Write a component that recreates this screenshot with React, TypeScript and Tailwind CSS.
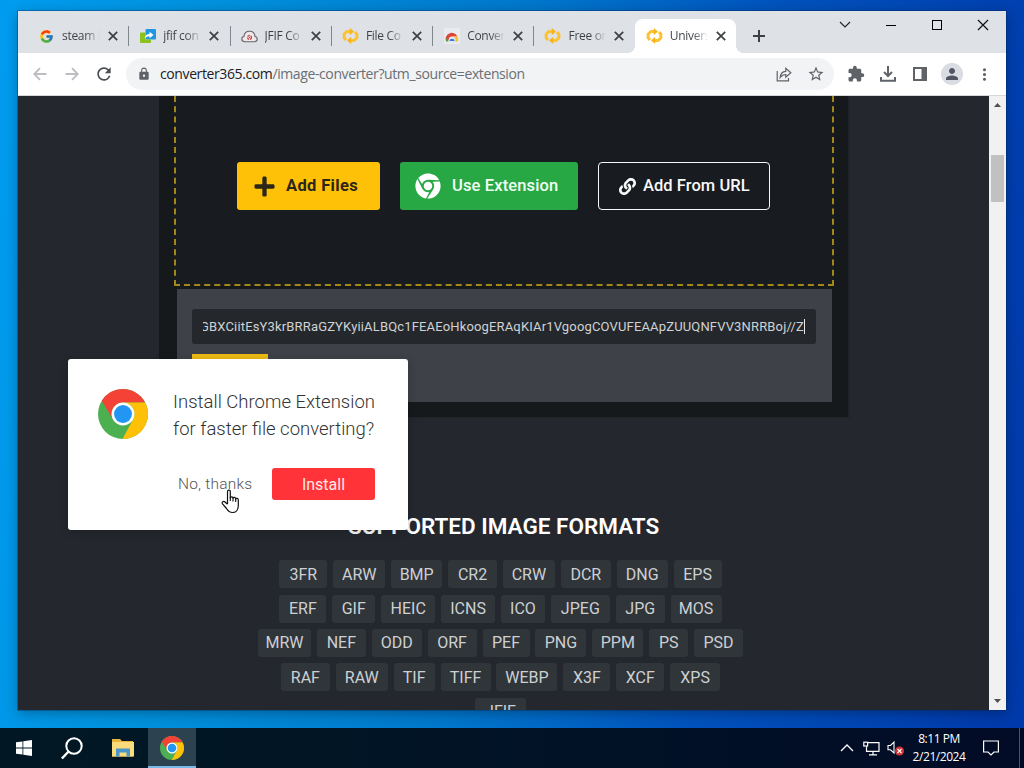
import type { ReactNode } from "react";
import { FaChrome, FaLink, FaPlus } from "react-icons/fa";
import { FcGoogle } from "react-icons/fc";
import { MdExtension, MdLock, MdMoreVert, MdPerson, MdRefresh, MdStarOutline } from "react-icons/md";

function ChromeLogo({ size, ring = "#fff" }: { size: number; ring?: string }) {
  return (
    <svg width={size} height={size} viewBox="0 0 48 48" className="block shrink-0">
      <circle cx="24" cy="24" r="24" fill="#4caf50" />
      <path d="M24 0a24 24 0 0 1 21.2 13H24a11 11 0 0 0-9.5 16.5L3.6 11.3A24 24 0 0 1 24 0z" fill="#f44336" />
      <path d="M24 13h21.3A24 24 0 0 1 23.500 48L33.500 29.500A11 11 0 0 0 24 13z" fill="#ffc107" />
      <circle cx="24" cy="24" r="11" fill={ring} />
      <circle cx="24" cy="24" r="8.600" fill="#2196f3" />
    </svg>
  );
}

function SyncMark() {
  return (
    <svg width="17" height="16" viewBox="0 0 17 16" className="block">
      <g fill="none" stroke="#fbc233" strokeWidth="3" strokeLinejoin="round">
        <path d="M4 12L2.100 9.800V6.200L4.800 3.500H8.500" />
        <path d="M13 4L14.900 6.200V9.800L12.200 12.500H8.500" />
      </g>
      <path d="M7.800 0L12 3.600L7.800 7.200z" fill="#f9b41c" />
      <path d="M9.200 8.800L5 12.400L9.200 16z" fill="#f9b41c" />
    </svg>
  );
}

function ConvertMark() {
  return (
    <svg width="16" height="14" viewBox="0 0 16 14" className="block">
      <rect x="5.500" y="0" width="10.500" height="10.500" rx="1" fill="#2196e3" />
      <path d="M0 4.500a1 1 0 0 1 1-1h4.500v7H11V13a1 1 0 0 1-1 1H1a1 1 0 0 1-1-1z" fill="#8cc21f" />
      <path d="M4.800 9.800C4.800 6.500 6.800 5 9.500 5V2.800L13.500 6L9.500 9.200V7.200C7.500 7.200 6 7.900 4.800 9.800z" fill="#fff" />
    </svg>
  );
}

function CloudMark() {
  return (
    <svg width="17" height="13" viewBox="0 0 17 13" className="block">
      <path d="M4 11.800C1.800 11.800.8 10.600.8 9.100C.8 7.600 1.800 6.700 3 6.500C3.200 3.200 5.500 1.200 8.500 1.200S13.800 3.200 14 6.500C15.200 6.700 16.200 7.600 16.200 9.100C16.200 10.600 15.200 11.800 13 11.800z" fill="#f0e9ea" stroke="#66666b" strokeWidth="1.100" />
      <circle cx="8.500" cy="7.400" r="2" fill="none" stroke="#d0424b" strokeWidth="1.300" strokeDasharray="2.400 .8" />
      <circle cx="8.500" cy="7.400" r=".7" fill="#d0323b" />
    </svg>
  );
}

function StoreMark() {
  return (
    <svg width="16" height="16" viewBox="0 0 16 16" className="block">
      <rect width="16" height="16" fill="#e9ebee" />
      <path d="M2.200 13.500A6 6 0 0 1 13.400 8.500H8A3.500 3.500 0 0 0 4.600 12z" fill="#dc4437" />
      <path d="M13.400 8.500A6 6 0 0 1 14 13.500H11.300A3.500 3.500 0 0 0 8 8.500z" fill="#fbc02d" />
      <path d="M2 13.500a6 6 0 0 1 .6-3.500L5 13.500z" fill="#5a9e54" />
      <path d="M4.900 13.500a3.200 3.200 0 0 1 6.400 0z" fill="#3f78d8" stroke="#fff" strokeWidth=".7" />
    </svg>
  );
}

function Cross({ size, color, width }: { size: number; color: string; width: number }) {
  return (
    <svg width={size} height={size} viewBox="0 0 10 10" className="block shrink-0">
      <path d="M.8 .8L9.200 9.200M9.200 .8L.8 9.200" stroke={color} strokeWidth={width} />
    </svg>
  );
}

const tabs: { title: string; icon: ReactNode; active?: boolean }[] = [
  { title: "steam l", icon: <FcGoogle size={15} /> },
  { title: "jfif con", icon: <ConvertMark /> },
  { title: "JFIF Co", icon: <CloudMark /> },
  { title: "File Co", icon: <SyncMark /> },
  { title: "Conver", icon: <StoreMark /> },
  { title: "Free on", icon: <SyncMark /> },
  { title: "Univers", icon: <SyncMark />, active: true },
];

function TabStrip() {
  return (
    <div className="flex h-[42px] shrink-0 items-start bg-[#dee1e6] pl-[9px]">
      <div className="flex pt-2">
        {tabs.map((t, i) => (
          <div
            key={i}
            className={`relative flex h-[34px] w-[101.300px] shrink-0 items-center pl-[11px] ${
              t.active ? "rounded-t-lg bg-white" : ""
            }`}
          >
            <span className="flex w-[17px] shrink-0 items-center justify-center">{t.icon}</span>
            <span
              className={`ml-[7px] w-[38px] shrink-0 overflow-hidden bg-linear-to-r from-[#3c4043] from-60% ${
                t.active ? "to-white" : "to-[#dee1e6]"
              } bg-clip-text text-[12px] tracking-[-0.300px] whitespace-nowrap text-transparent`}
            >
              {t.title}
            </span>
            <span className="ml-2">
              <Cross size={10} color="#3c4043" width={1.700} />
            </span>
            {!t.active && i < 5 && <span className="-mr-px ml-auto h-5 w-px bg-[#80868b]" />}
            {t.active && (
              <>
                <span className="absolute bottom-0 -left-2 size-2 bg-[radial-gradient(circle_at_0_0,transparent_8px,#fff_8px)]" />
                <span className="absolute -right-2 bottom-0 size-2 bg-[radial-gradient(circle_at_100%_0,transparent_8px,#fff_8px)]" />
              </>
            )}
          </div>
        ))}
      </div>
      <svg width="12" height="12" viewBox="0 0 12 12" className="mt-[19px] ml-[17px]">
        <path d="M6 0V12M0 6H12" stroke="#3c4043" strokeWidth="2" />
      </svg>
      <div className="ml-auto flex h-[28px] shrink-0 items-center">
        <span className="flex w-[46px] justify-center">
          <svg width="12" height="8" viewBox="0 0 12 8"><path d="M1 1L6 6L11 1" fill="none" stroke="#222" strokeWidth="1.100" /></svg>
        </span>
        <span className="flex w-[46px] justify-center"><span className="h-px w-[10px] bg-black" /></span>
        <span className="flex w-[46px] justify-center"><span className="size-[10px] border border-black" /></span>
        <span className="flex w-[46px] justify-center"><Cross size={12} color="#111" width={1} /></span>
      </div>
    </div>
  );
}

function ToolButton({ children }: { children: ReactNode }) {
  return <span className="flex size-8 shrink-0 items-center justify-center text-[#5f6368]">{children}</span>;
}

function Toolbar() {
  return (
    <div className="flex h-[43px] shrink-0 items-center border-b border-[#d5d8dc] bg-white px-1.5">
      <ToolButton>
        <svg width="14" height="14" viewBox="0 0 14 14"><path d="M13.500 7H1.500M7 1.200L1.200 7L7 12.800" fill="none" stroke="#bbbdc0" strokeWidth="1.800" /></svg>
      </ToolButton>
      <ToolButton>
        <svg width="14" height="14" viewBox="0 0 14 14"><path d="M.5 7H12.500M7 1.200L12.800 7L7 12.800" fill="none" stroke="#bbbdc0" strokeWidth="1.800" /></svg>
      </ToolButton>
      <ToolButton><MdRefresh size={20} className="text-[#4a4d51]" /></ToolButton>
      <div className="ml-1.5 flex h-8 w-[708px] shrink-0 items-center rounded-full bg-[#f1f3f4] pl-[11px]">
        <MdLock size={14} className="text-[#5f6368]" />
        <span className="ml-[9px] pb-px text-[14px] tracking-[-0.390px] whitespace-nowrap text-[#6b6f74]">
          <span className="text-[#202124]">converter365.com</span>/image-converter?utm_source=extension
        </span>
        <span className="mr-0.5 ml-auto flex">
          <ToolButton>
            <svg width="16" height="15" viewBox="0 0 16 15" fill="none" stroke="#5f6368" strokeWidth="1.200">
              <path d="M1.200 4V13.800H12.500V11" />
              <path d="M4.200 10.500C4.500 6.500 6.500 4.500 9.800 4.300V1.400L14.800 5.800L9.800 10.200V7.500C7.500 7.500 5.800 8.300 4.200 10.500z" />
            </svg>
          </ToolButton>
          <ToolButton><MdStarOutline size={18} /></ToolButton>
        </span>
      </div>
      <div className="ml-1.5 flex shrink-0">
        <ToolButton><MdExtension size={18} /></ToolButton>
        <ToolButton>
          <svg width="16" height="16" viewBox="0 0 16 16" fill="none" stroke="#5f6368" strokeWidth="2">
            <path d="M8 0V9.500M4 6L8 10L12 6M1 11V14.800H15V11" />
          </svg>
        </ToolButton>
        <ToolButton>
          <svg width="14" height="14" viewBox="0 0 14 14"><rect x="1" y="1" width="12" height="12" fill="none" stroke="#5f6368" strokeWidth="2" /><rect x="8.500" y="1" width="4.500" height="12" fill="#5f6368" /></svg>
        </ToolButton>
        <ToolButton>
          <span className="flex size-[22px] items-center justify-center rounded-full bg-[#dadce3]">
            <MdPerson size={18} className="text-[#4f5661]" />
          </span>
        </ToolButton>
        <ToolButton><MdMoreVert size={19} /></ToolButton>
      </div>
    </div>
  );
}

const formatRows: [string, string][][] = [
  [["3FR", "w-[48px]"], ["ARW", "w-[52px]"], ["BMP", "w-[51px]"], ["CR2", "w-[49px]"], ["CRW", "w-[52px]"], ["DCR", "w-[50px]"], ["DNG", "w-[51px]"], ["EPS", "w-[48px]"]],
  [["ERF", "w-[47px]"], ["GIF", "w-[43px]"], ["HEIC", "w-[54px]"], ["ICNS", "w-[54px]"], ["ICO", "w-[44px]"], ["JPEG", "w-[59px]"], ["JPG", "w-[49px]"], ["MOS", "w-[51px]"]],
  [["MRW", "w-[53px]"], ["NEF", "w-[49px]"], ["ODD", "w-[50px]"], ["ORF", "w-[49px]"], ["PEF", "w-[47px]"], ["PNG", "w-[51px]"], ["PPM", "w-[51px]"], ["PS", "w-[39px]"], ["PSD", "w-[49px]"]],
  [["RAF", "w-[49px]"], ["RAW", "w-[52px]"], ["TIF", "w-[41px]"], ["TIFF", "w-[50px]"], ["WEBP", "w-[61px]"], ["X3F", "w-[47px]"], ["XCF", "w-[48px]"], ["XPS", "w-[50px]"]],
  [["JFIF", "w-[51px]"]],
];

function ConverterPage() {
  return (
    <div className="flex h-[614px] w-[971px] shrink-0 flex-col overflow-hidden bg-[#24282e] font-[Roboto,'Liberation_Sans',sans-serif]">
      <div className="ml-[141px] h-[322px] w-[691px] shrink-0 border-r-2 border-b border-[#202327] bg-[#16191c] pl-[15px]">
        <div className="flex h-[190px] w-[660px] gap-5 border-2 border-t-0 border-dashed border-[#a58618] bg-[#181b1f] pt-[66px] pl-[61px]">
          <div className="flex h-12 w-[143px] shrink-0 items-center rounded-[3px] bg-[#ffc107] pl-4 text-[#2b2618]">
            <FaPlus size={23} />
            <span className="ml-[10px] text-[16.500px] font-bold tracking-[0.350px] whitespace-nowrap">Add Files</span>
          </div>
          <div className="flex h-12 w-[178px] shrink-0 items-center rounded-[3px] bg-[#28a745] pl-[15px] text-[#f0fff2]">
            <FaChrome size={26} className="text-white" />
            <span className="ml-[11px] text-[16.500px] font-medium tracking-[0.130px] whitespace-nowrap">Use Extension</span>
          </div>
          <div className="flex h-12 w-[172px] shrink-0 items-center rounded-[4px] border border-[#f8f9fa] pl-5 text-[#f8f9fa]">
            <FaLink size={17} />
            <span className="ml-[7px] text-[16.500px] font-medium tracking-[0.050px] whitespace-nowrap">Add From URL</span>
          </div>
        </div>
        <div className="mt-[3px] ml-[3px] h-[113px] w-[655px] bg-[#3e4148] px-[15px] pt-5">
          <div className="flex h-[35px] w-[624px] items-center justify-end rounded-[3px] bg-[#24282c] pr-[11px] pl-[11px]">
            <span className="flex h-[15px] w-[602px] items-center justify-end overflow-hidden border-r border-[#e8e8e8] text-[13px] tracking-[0.160px] whitespace-nowrap text-[#d0d2d4]">
              GBXCiitEsY3krBRRaGZYKyiiALBQc1FEAEoHkoogERAqKIAr1VgoogCOVUFEAApZUUQNFVV3NRRBoj//Z
            </span>
          </div>
          <div className="mt-[10px] h-8 w-[76px] bg-[#edbb15]" />
        </div>
      </div>
      <h2 className="mt-[92px] ml-[330px] h-8 shrink-0 text-[22.500px] leading-8 font-semibold whitespace-nowrap text-white">
        SUPPORTED IMAGE FORMATS
      </h2>
      <div className="mt-[18.400px] flex w-[965px] shrink-0 flex-col gap-[6.300px]">
        {formatRows.map((row, i) => (
          <div key={i} className="flex justify-center gap-[5.900px]">
            {row.map(([name, width]) => (
              <span key={name} className={`flex h-[28px] shrink-0 items-center justify-center rounded-[3px] bg-[#30353a] pt-px text-[16px] text-[#cdd0d3] ${width}`}>
                {name}
              </span>
            ))}
          </div>
        ))}
      </div>
    </div>
  );
}

function InstallPrompt() {
  return (
    <div className="absolute top-[359px] left-[68px] h-[171px] w-[340px] rounded-[3px] bg-white font-[Roboto,'Liberation_Sans',sans-serif] shadow-[0_2px_10px_rgba(0,0,0,0.2)]">
      <div className="flex pt-[30px] pl-[30px]">
        <ChromeLogo size={50} />
        <p className="ml-[25px] text-[18.500px] leading-[27px] font-light whitespace-nowrap text-[#333]">
          <span className="block tracking-[0.020px]">Install Chrome Extension</span>
          <span className="block">for faster file converting?</span>
        </p>
      </div>
      <div className="mt-[25px] flex items-center pl-[110px]">
        <span className="w-[74px] pt-px text-[15.500px] font-light tracking-[0.200px] whitespace-nowrap text-[#555]">No, thanks</span>
        <span className="ml-5 flex h-8 w-[103px] items-center justify-center rounded-[3px] bg-[#ff3338] pt-px text-[16px] text-[#ffe9e6]">Install</span>
      </div>
      <svg width="19" height="25" viewBox="0 0 19 25" className="absolute top-[130px] left-[153px]">
        <path d="M6.500 15V2.600C6.500.6 9.300.6 9.300 2.600V9C9.500 7.400 12 7.600 12 9.200C12.400 8 14.700 8.200 14.700 9.900C15.200 8.900 17.300 9.200 17.300 11V16.500C17.300 20.500 15 23.500 11.500 23.500C8.200 23.500 7 22 5.500 19.500L1.500 14.800C.3 13 2.600 11.600 4.300 13.200L6.500 15.300" fill="#fff" stroke="#111" strokeWidth="1.200" strokeLinejoin="round" />
        <path d="M9.300 8V12M12 9.200V12.500M14.700 10V13" stroke="#111" strokeWidth="1.100" />
      </svg>
    </div>
  );
}

function Taskbar() {
  return (
    <div className="flex h-10 shrink-0 items-stretch bg-linear-to-r from-[#011824] via-[#011326] to-[#020b26] text-white">
      <span className="flex w-12 items-center justify-center">
        <svg width="16" height="16" viewBox="0 0 16 16" fill="#fff"><path d="M0 2.300L6.500 1.400V7.600H0zM7.300 1.300L16 0V7.600H7.300zM0 8.400H6.500V14.600L0 13.700zM7.300 8.400H16V16L7.300 14.700z" /></svg>
      </span>
      <span className="flex w-12 items-center justify-center">
        <svg width="22" height="23" viewBox="0 0 22 23" fill="none" stroke="#fff" strokeWidth="2"><circle cx="13" cy="9" r="7.700" /><path d="M7.600 14.500L.9 21.500" strokeWidth="2.500" /></svg>
      </span>
      <span className="flex w-[54px] items-center justify-center">
        <svg width="22" height="18" viewBox="0 0 22 18">
          <path d="M0 0H8L10 2H21V17.500H0z" fill="#e8b53c" />
          <rect y="3" width="22" height="14.500" fill="#fbdc7c" />
          <path d="M4 9.500H18V17.500H14.500V13.500H7.500V17.500H4z" fill="#4a96c8" />
        </svg>
      </span>
      <span className="-ml-0.5 flex w-12 items-center justify-center border-b-2 border-[#79b8ea] bg-[#2c424e] pt-0.5">
        <ChromeLogo size={24} />
      </span>
      <span className="ml-auto flex w-6 items-center justify-center">
        <svg width="14" height="8" viewBox="0 0 14 8"><path d="M1 7L7 1L13 7" fill="none" stroke="#fff" strokeWidth="1.300" /></svg>
      </span>
      <span className="flex w-6 items-center justify-center">
        <svg width="17" height="15" viewBox="0 0 17 15" fill="none" stroke="#fff" strokeWidth="1.200"><path d="M5 1.600H16V10.400H3.500V5.500M10 10.400V13.800M6 13.900H14" /><rect x=".8" y="1.200" width="3.800" height="3.800" /></svg>
      </span>
      <span className="flex w-6 items-center justify-center">
        <svg width="17" height="16" viewBox="0 0 17 16"><path d="M1 5.500H3.500L7 2V13L3.500 9.800H1z" fill="none" stroke="#fff" strokeWidth="1.100" /><circle cx="12.500" cy="11" r="4.500" fill="#d13438" /><path d="M10.500 9L14.500 13M14.500 9L10.500 13" stroke="#fff" strokeWidth="1.100" /></svg>
      </span>
      <span className="flex w-[64px] flex-col items-center justify-center text-[12px] leading-[18px] tracking-[-0.450px] whitespace-nowrap">
        <span>8:11 PM</span>
        <span>2/21/2024</span>
      </span>
      <span className="flex w-[40px] items-center justify-center">
        <svg width="16" height="16" viewBox="0 0 16 16"><path d="M.6 1H15.400V12H11L8 15L5 12H.6z" fill="none" stroke="#fff" strokeWidth="1.200" /></svg>
      </span>
      <span className="mr-1 ml-2 w-px bg-[#4a5266]" />
    </div>
  );
}

export default function App() {
  return (
    <div className="relative flex h-[768px] w-[1024px] flex-col overflow-hidden bg-[linear-gradient(97deg,#009cf0_0%,#0091dd_20%,#0077cc_48%,#0052bd_70%,#0038aa_100%)] font-['Open_Sans','Noto_Sans',sans-serif]">
      <div className="h-[728px] pt-[11px] pl-[18px]">
        <div className="flex h-[699px] w-[988px] flex-col shadow-[0_0_0_1px_rgba(0,40,90,0.35),0_3px_12px_rgba(0,0,0,0.3)]">
          <TabStrip />
          <Toolbar />
          <div className="flex h-[614px]">
            <ConverterPage />
            <div className="flex w-[17px] shrink-0 flex-col items-center bg-[#f1f1f1]">
              <svg width="7" height="4" viewBox="0 0 7 4" className="mt-[7px]"><path d="M0 4L3.500 0L7 4z" fill="#505050" /></svg>
              <div className="mt-12 h-[47px] w-[13px] bg-[#c1c1c1]" />
              <svg width="7" height="4" viewBox="0 0 7 4" className="mt-auto mb-[7px]"><path d="M0 0L3.500 4L7 0z" fill="#505050" /></svg>
            </div>
          </div>
        </div>
      </div>
      <Taskbar />
      <InstallPrompt />
    </div>
  );
}
